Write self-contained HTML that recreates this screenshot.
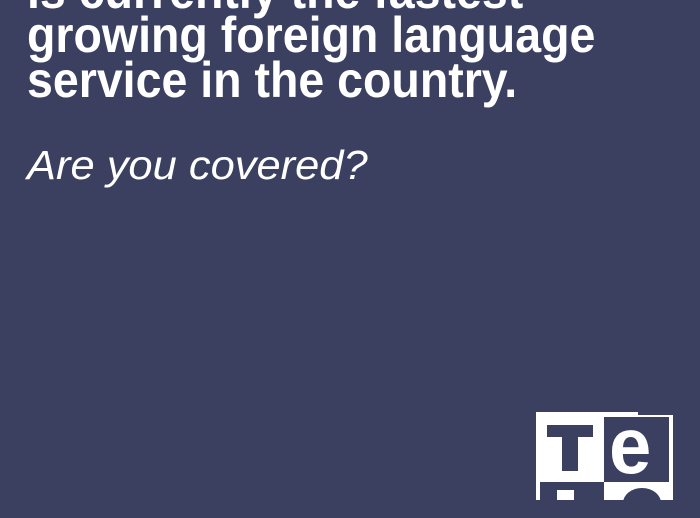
<!DOCTYPE html>
<html><head><style>
html,body{margin:0;padding:0;}
body{width:700px;height:500px;background:#3b4061;position:relative;overflow:hidden;font-family:"Liberation Sans",Arial,sans-serif;color:#fff;}
.b{position:absolute;left:27px;font-weight:bold;font-size:50px;white-space:nowrap;transform-origin:0 0;transform:scaleX(0.93);line-height:50px;}
.i{position:absolute;left:27px;top:145px;font-style:italic;font-size:41px;white-space:nowrap;transform-origin:0 0;transform:scaleX(1.06);line-height:41px;}
.r{position:absolute;}
</style></head><body>
<div class="b" style="top:-34px">is currently the fastest</div>
<div class="b" style="top:10px">growing foreign language</div>
<div class="b" style="top:55px">service in the country.</div>
<div class="i">Are you covered?</div>

<div class="r" style="left:536px;top:412px;width:102px;height:88px;background:#fff"></div>
<div class="r" style="left:604px;top:415px;width:69px;height:85px;background:#fff"></div>
<div class="r" style="left:604px;top:417px;width:65px;height:65px;background:#3b4061"></div>
<div class="r" style="left:547px;top:425px;width:46px;height:12px;background:#3b4061"></div>
<div class="r" style="left:562px;top:425px;width:16px;height:46px;background:#3b4061"></div>
<div class="r" style="left:609px;top:406px;font-weight:bold;font-size:80px;color:#fff;line-height:80px;transform:scaleX(0.95);transform-origin:0 0">e</div>
<div class="r" style="left:540px;top:482px;width:64px;height:18px;background:#3b4061"></div>
<div class="r" style="left:557px;top:490px;width:17px;height:10px;background:#fff"></div>
<div class="r" style="left:623px;top:488px;width:38px;height:30px;border-radius:50%;background:#3b4061"></div>
</body></html>
